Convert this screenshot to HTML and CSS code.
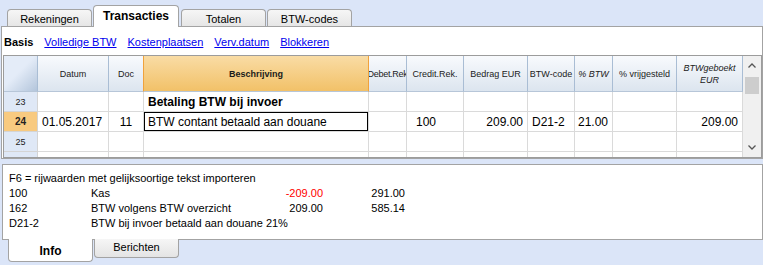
FILE: index.html
```html
<html>

<head>
    <title>Transacties</title>
    <link rel="stylesheet" href="styles.css">
</head>

<body>

    <div class="tabs">
        <div class="tab">Rekeningen</div>
        <div class="tab active">Transacties</div>
        <div class="tab">Totalen</div>
        <div class="tab">BTW-codes</div>
    </div>

    <div class="panel">
        <div class="views">
            <b>Basis</b>
            <a href="#">Volledige BTW</a>
            <a href="#">Kostenplaatsen</a>
            <a href="#">Verv.datum</a>
            <a href="#">Blokkeren</a>
        </div>

        <div class="grid">
            <div class="table">
                <div class="hd corner"></div>
                <div class="hd">Datum</div>
                <div class="hd">Doc</div>
                <div class="hd hd-sel"><b>Beschrijving</b></div>
                <div class="hd hd-tight">Debet.Rek</div>
                <div class="hd">Credit.Rek.</div>
                <div class="hd">Bedrag EUR</div>
                <div class="hd">BTW-code</div>
                <div class="hd"><i>% BTW</i></div>
                <div class="hd">% vrijgesteld</div>
                <div class="hd"><i>BTWgeboekt<br>EUR</i></div>

                <div class="rh">23</div>
                <div class="c"></div>
                <div class="c"></div>
                <div class="c"><b>Betaling BTW bij invoer</b></div>
                <div class="c"></div>
                <div class="c"></div>
                <div class="c"></div>
                <div class="c"></div>
                <div class="c"></div>
                <div class="c"></div>
                <div class="c"></div>

                <div class="rh rh-sel">24</div>
                <div class="c">01.05.2017</div>
                <div class="c num-c">11</div>
                <div class="c cur">BTW contant betaald aan douane</div>
                <div class="c"></div>
                <div class="c acc">100</div>
                <div class="c num">209.00</div>
                <div class="c">D21-2</div>
                <div class="c num">21.00</div>
                <div class="c"></div>
                <div class="c num">209.00</div>

                <div class="rh">25</div>
                <div class="c"></div>
                <div class="c"></div>
                <div class="c"></div>
                <div class="c"></div>
                <div class="c"></div>
                <div class="c"></div>
                <div class="c"></div>
                <div class="c"></div>
                <div class="c"></div>
                <div class="c"></div>

                <div class="rh"></div>
                <div class="c"></div>
                <div class="c"></div>
                <div class="c"></div>
                <div class="c"></div>
                <div class="c"></div>
                <div class="c"></div>
                <div class="c"></div>
                <div class="c"></div>
                <div class="c"></div>
                <div class="c"></div>
            </div>

            <div class="scrollbar">
                <div class="arrow">
                    <svg width="8" height="5" viewBox="0 0 8 5"><path d="M0.5 4.5 L4 1 L7.5 4.5" fill="none" stroke="#555" stroke-width="1.3"/></svg>
                </div>
                <div class="thumb"></div>
                <div class="arrow down">
                    <svg width="8" height="5" viewBox="0 0 8 5"><path d="M0.5 0.5 L4 4 L7.5 0.5" fill="none" stroke="#555" stroke-width="1.3"/></svg>
                </div>
            </div>
        </div>
    </div>

    <div class="info">
        <div class="info-line">F6 = rijwaarden met gelijksoortige tekst importeren</div>
        <div class="info-rows">
            <span>100</span><span>Kas</span><span class="amt neg">-209.00</span><span class="amt">291.00</span>
            <span>162</span><span>BTW volgens BTW overzicht</span><span class="amt">209.00</span><span class="amt">585.14</span>
            <span>D21-2</span><span class="wide">BTW bij invoer betaald aan douane 21%</span>
        </div>
    </div>

    <div class="subtabs">
        <div class="subtab active">Info</div>
        <div class="subtab">Berichten</div>
    </div>

</body>

</html>
```

FILE: styles.css
```css
body {
    margin: 0;
    width: 763px;
    height: 265px;
    overflow: hidden;
    background-color: #dbe5f8;
    font-family: 'Liberation Sans', Arial, sans-serif;
    font-size: 11px;
    color: #000;
}

/* top tabs */
.tabs {
    display: flex;
    align-items: flex-end;
    height: 26px;
    padding-left: 7px;
}

.tab {
    box-sizing: border-box;
    width: 85px;
    height: 17px;
    margin-right: 1px;
    border: 1px solid #a3a3a3;
    border-bottom: none;
    border-radius: 4px 4px 0 0;
    background: linear-gradient(#f6f6f6, #e6e6e6);
    display: flex;
    align-items: center;
    justify-content: center;
    font-size: 11px;
    padding-top: 1px;
}

.tab.active {
    width: 86px;
    height: 22px;
    margin-bottom: -1px;
    margin-right: 2px;
    background: #fff;
    position: relative;
    z-index: 1;
    font-weight: bold;
    font-size: 12px;
    padding-top: 0;
    padding-bottom: 2px;
}

/* main panel */
.panel {
    box-sizing: border-box;
    width: 762px;
    margin-left: 1px;
    border: 1px solid #a3a3a3;
    background: #fff;
}

.views {
    height: 28px;
    display: flex;
    align-items: center;
    gap: 11px;
    padding-left: 2px;
    padding-top: 2px;
    box-sizing: border-box;
}

.views b {
    font-size: 11px;
}

.views a {
    color: #0000ee;
}

.grid {
    box-sizing: border-box;
    width: 759px;
    height: 103px;
    margin-left: 1px;
    border: 1px solid #9c9c9c;
    display: flex;
    overflow: hidden;
}

.table {
    display: grid;
    grid-template-columns: 34px 71px 35px 225px 38px 57px 64px 47px 38px 64px 66px;
    grid-template-rows: 36px;
    grid-auto-rows: 20px;
    width: 739px;
    flex: none;
}

.hd {
    box-sizing: border-box;
    border-right: 1px solid #a9bdd4;
    border-bottom: 1px solid #b7c6d8;
    background: linear-gradient(#f8fafd, #dce5ef);
    display: flex;
    align-items: center;
    justify-content: center;
    text-align: center;
    overflow: hidden;
    white-space: nowrap;
    font-size: 9px;
    line-height: 12px;
    color: #1b1b1b;
}

.hd.hd-tight {
    letter-spacing: -0.3px;
}

.hd.corner {
    background: linear-gradient(135deg, #e4ecf8 45%, #b3c5db);
}

.hd.hd-sel {
    background: linear-gradient(#f9dca5, #f2c168);
    border-right-color: #f0a23c;
    border-left: 1px solid #f0a23c;
    margin-left: -1px;
}

.rh {
    box-sizing: border-box;
    border-right: 1px solid #d4d4d4;
    border-bottom: 1px solid #d4d4d4;
    background: #dfe8f6;
    display: flex;
    align-items: center;
    justify-content: center;
    font-size: 9px;
    color: #222;
}

.rh.rh-sel {
    background: #f8ca80;
    font-weight: bold;
    font-size: 10px;
}

.c {
    box-sizing: border-box;
    border-right: 1px solid #dadada;
    border-bottom: 1px solid #dadada;
    display: flex;
    align-items: center;
    padding: 0 4px;
    font-size: 12px;
    white-space: nowrap;
    overflow: hidden;
}

.c.num {
    justify-content: flex-end;
}

.c.num-c {
    justify-content: center;
}

.c.acc {
    padding-left: 9px;
}

.c.cur {
    box-shadow: inset 0 0 0 1px #000;
}

/* scrollbar */
.scrollbar {
    width: 18px;
    flex: none;
    background: #f0f0f0;
    display: flex;
    flex-direction: column;
    align-items: center;
}

.arrow {
    height: 18px;
    width: 100%;
    display: flex;
    align-items: center;
    justify-content: center;
}

.arrow.down {
    margin-top: auto;
    padding-bottom: 1px;
}

.thumb {
    width: 14px;
    height: 17px;
    margin-top: 3px;
    background: #cdcdcd;
}

/* info panel */
.info {
    box-sizing: border-box;
    width: 761px;
    height: 76px;
    margin: 5px 0 0 2px;
    border: 1px solid #a3a3a3;
    background: #fff;
    padding: 6px 0 0 6px;
    line-height: 15px;
    font-size: 11px;
}

.info-rows {
    display: grid;
    grid-template-columns: 82px 162px 70px 82px;
}

.info-rows .amt {
    text-align: right;
}

.info-rows .neg {
    color: #ff0000;
}

.info-rows .wide {
    grid-column: span 3;
}

/* bottom tabs */
.subtabs {
    display: flex;
    align-items: flex-start;
    padding-left: 8px;
    margin-top: -1px;
}

.subtab {
    box-sizing: border-box;
    width: 85px;
    height: 19px;
    margin-right: 1px;
    border: 1px solid #a3a3a3;
    border-top: none;
    border-radius: 0 0 4px 4px;
    background: linear-gradient(#f6f6f6, #e4e4e4);
    display: flex;
    align-items: center;
    justify-content: center;
    font-size: 11px;
    padding-bottom: 2px;
}

.subtab.active {
    height: 23px;
    background: #fff;
    font-weight: bold;
    font-size: 12px;
    padding-bottom: 0;
    padding-top: 2px;
}
```
